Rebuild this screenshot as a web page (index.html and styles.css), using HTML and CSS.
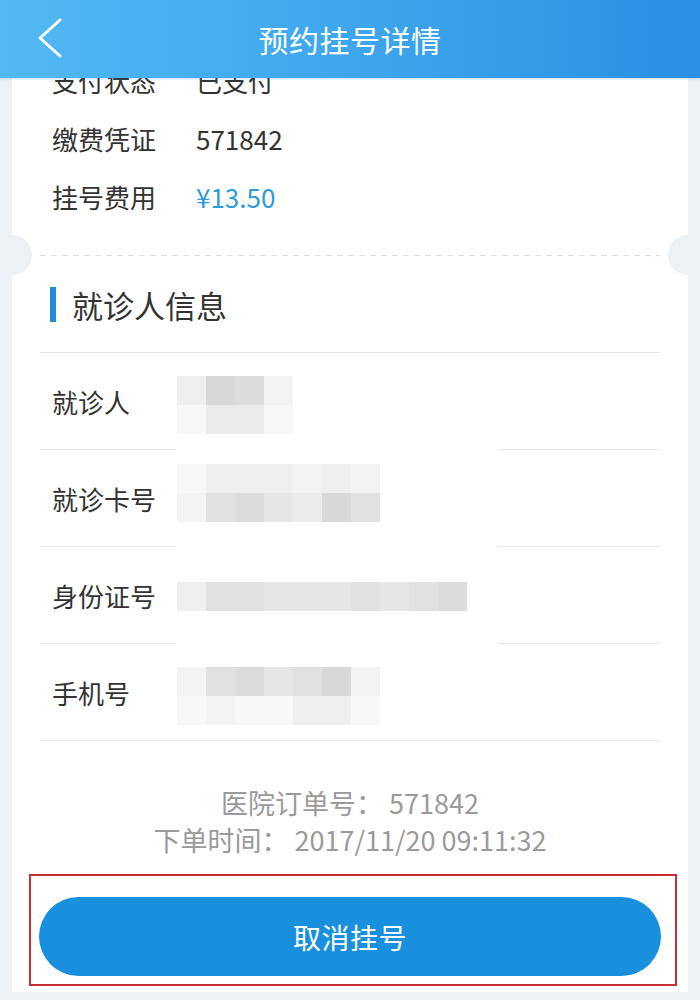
FILE: index.html
```html
<!DOCTYPE html>
<html lang="zh-CN">
<head>
<meta charset="utf-8">
<title>预约挂号详情</title>
<link rel="stylesheet" href="styles.css">
</head>
<body>
<header class="topbar">
  <div class="back-wrap">
    <svg class="back" width="26" height="42" viewBox="0 0 26 42" aria-hidden="true">
      <path d="M23 2 L3 20 L23 38" fill="none" stroke="#ffffff" stroke-width="3" stroke-linecap="round" stroke-linejoin="round"/>
    </svg>
  </div>
  <h1 class="title">预约挂号详情</h1>
  <div class="spacer"></div>
</header>

<main class="page">
  <div class="card">
    <section class="pay">
      <div class="pay-row"><span class="pay-label">支付状态</span><span class="pay-value">已支付</span></div>
      <div class="pay-row"><span class="pay-label">缴费凭证</span><span class="pay-value">571842</span></div>
      <div class="pay-row"><span class="pay-label">挂号费用</span><span class="pay-value price">¥13.50</span></div>
    </section>

    <div class="tear"></div>

    <section class="patient">
      <h2 class="sec-title"><span class="bar"></span>就诊人信息</h2>

      <div class="prow">
        <div class="plabel lined">就诊人</div>
        <div class="pvalue v1">
          <div class="mrow"><span class="m s6"></span><span class="m s1"></span><span class="m s2"></span><span class="m s7"></span></div>
          <div class="mrow"><span class="m s8"></span><span class="m s5"></span><span class="m s5"></span><span class="m s8"></span></div>
        </div>
        <div class="pfill lined"></div>
      </div>

      <div class="prow">
        <div class="plabel lined">就诊卡号</div>
        <div class="pvalue v2">
          <div class="mrow"><span class="m s8"></span><span class="m s6"></span><span class="m s6"></span><span class="m s6"></span><span class="m s7"></span><span class="m s6"></span><span class="m s7"></span></div>
          <div class="mrow"><span class="m s7"></span><span class="m s3"></span><span class="m s2"></span><span class="m s4"></span><span class="m s5"></span><span class="m s1"></span><span class="m s3"></span></div>
        </div>
        <div class="pfill lined"></div>
      </div>

      <div class="prow">
        <div class="plabel lined">身份证号</div>
        <div class="pvalue v3">
          <div class="mrow"><span class="m s6"></span><span class="m s3"></span><span class="m s3"></span><span class="m s4"></span><span class="m s4"></span><span class="m s4"></span><span class="m s3"></span><span class="m s4"></span><span class="m s3"></span><span class="m s2"></span></div>
        </div>
        <div class="pfill lined"></div>
      </div>

      <div class="prow last">
        <div class="plabel">手机号</div>
        <div class="pvalue v4">
          <div class="mrow"><span class="m s7"></span><span class="m s3"></span><span class="m s2"></span><span class="m s4"></span><span class="m s3"></span><span class="m s1"></span><span class="m s7"></span></div>
          <div class="mrow"><span class="m s8"></span><span class="m s7"></span><span class="m s8"></span><span class="m s8"></span><span class="m s6"></span><span class="m s6"></span><span class="m s8"></span></div>
        </div>
        <div class="pfill"></div>
      </div>
    </section>

    <div class="order">
      <p>医院订单号： 571842</p>
      <p>下单时间： 2017/11/20 09:11:32</p>
    </div>

    <div class="mark">
      <button class="cancel" type="button">取消挂号</button>
    </div>
  </div>
</main>
</body>
</html>
```

FILE: styles.css
```css
* { box-sizing: border-box; }

html, body {
  margin: 0;
  padding: 0;
}

body {
  background: #edf0f5;
  font-family: "Noto Sans CJK SC", "Noto Sans", "Liberation Sans", sans-serif;
  color: #333333;
  height: 1000px;
  overflow: hidden;
}

.topbar {
  position: relative;
  z-index: 2;
  height: 78px;
  display: grid;
  grid-template-columns: 1fr auto 1fr;
  align-items: center;
  background: linear-gradient(90deg, #52b9f3 0%, #3ea6ee 50%, #2b8fe2 100%);
  box-shadow: 0 1px 2px rgba(40, 120, 200, 0.25);
}

.back-wrap {
  padding-left: 37px;
  display: flex;
  align-items: center;
}

.back { display: block; }

.title {
  margin: 0;
  color: #ffffff;
  font-size: 30px;
  font-weight: 400;
  line-height: 78px;
  letter-spacing: 0.5px;
}

.page {
  padding: 0 12px;
}

.card {
  margin-top: -27px;
  background: #ffffff;
  padding: 0 28px 6px;
}

/* payment rows */
.pay {
  padding: 0 0 30px 12px;
}

.pay-row {
  height: 58px;
  display: flex;
  align-items: center;
  font-size: 26px;
}

.pay-label {
  width: 144px;
  flex: none;
}

.pay-value.price {
  color: #2e9bd6;
}

/* torn ticket divider */
.tear {
  position: relative;
  height: 1px;
  background-image: linear-gradient(90deg, #dadee4 0, #dadee4 6px, transparent 6px, transparent 11px);
  background-size: 11px 1px;
  background-repeat: repeat-x;
}

.tear::before,
.tear::after {
  content: "";
  position: absolute;
  top: -20px;
  width: 40px;
  height: 40px;
  border-radius: 50%;
  background: #edf0f5;
}

.tear::before { left: -48px; }
.tear::after { right: -48px; }

/* patient section */
.sec-title {
  margin: 0;
  height: 97px;
  display: flex;
  align-items: center;
  padding-left: 10px;
  font-size: 31px;
  font-weight: 400;
  color: #333333;
  border-bottom: 1px solid #e6e6e6;
}

.bar {
  width: 6px;
  height: 35px;
  background: #1e8fd6;
  margin-right: 16px;
  flex: none;
}

.prow {
  display: grid;
  grid-template-columns: 136px 323px 1fr;
  height: 97px;
}

.prow.last {
  border-bottom: 1px solid #e6e6e6;
}

.plabel {
  display: flex;
  align-items: center;
  padding-left: 12px;
  font-size: 26px;
}

.lined {
  border-bottom: 1px solid #e6e6e6;
}

.pvalue {
  padding-left: 1px;
  display: flex;
  flex-direction: column;
}

.v1 { padding-top: 23px; }
.v2 { padding-top: 14px; }
.v3 { padding-top: 35px; }
.v4 { padding-top: 23px; }

.mrow {
  display: flex;
}

.m {
  width: 29px;
  height: 29px;
  flex: none;
}

.s1 { background: #d8d8da; }
.s2 { background: #dcdcde; }
.s3 { background: #e1e1e3; }
.s4 { background: #e6e6e8; }
.s5 { background: #ebebed; }
.s6 { background: #efeff1; }
.s7 { background: #f3f3f5; }
.s8 { background: #f8f8f9; }

/* order info */
.order {
  padding-top: 43px;
  text-align: center;
  color: #9a9a9a;
  font-size: 27px;
  line-height: 37px;
}

.order p {
  margin: 0;
}

/* annotated cancel button */
.mark {
  margin: 16px -17px 0 -11px;
  border: 2px solid #c62f35;
  padding: 21px 14px 8px 8px;
}

.cancel {
  display: block;
  width: 100%;
  height: 79px;
  border: 0;
  border-radius: 40px;
  background: #1890de;
  color: #ffffff;
  font-family: "Noto Sans CJK SC", "Noto Sans", sans-serif;
  font-size: 28px;
  letter-spacing: 0.5px;
  cursor: pointer;
}
```
